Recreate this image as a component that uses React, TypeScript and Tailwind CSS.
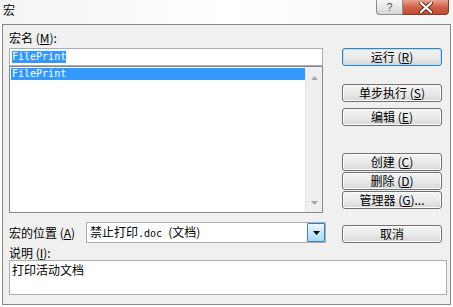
import React from "react";

const font = { fontFamily: '"Noto Sans CJK SC", "Liberation Sans", sans-serif' };
const mono = { fontFamily: '"DejaVu Sans Mono", "Liberation Mono", "Noto Sans CJK SC", monospace' };

function Btn({ children, className = "", primary = false }: { children: React.ReactNode; className?: string; primary?: boolean }) {
  return (
    <div
      className={
        "h-[18px] w-[100px] rounded-[3px] border flex items-center justify-center text-[12px] leading-[12px] text-black bg-gradient-to-b from-[#f2f2f2] via-[#ebebeb] to-[#d6d6d6] " +
        (primary ? "border-[#3c7fb1] shadow-[inset_0_0_0_1px_#aee2f7]" : "border-[#707070] shadow-[inset_0_0_0_1px_#fcfcfc]") +
        " " +
        className
      }
    >
      {children}
    </div>
  );
}

export default function App() {
  return (
    <div className="w-[453px] h-[307px] bg-white overflow-hidden text-black" style={font}>
      {/* title bar */}
      <div className="h-[24px] flex items-start justify-between bg-gradient-to-r from-[#f4f4f4] via-[#ffffff] to-[#f4f4f4]">
        <div className="pl-[3px] pt-[4px] text-[12px] leading-[12px]">宏</div>
        <div className="flex mr-[4px]">
          <div className="w-[27px] h-[15px] rounded-bl-[4px] border border-t-0 border-[#8c8c8c] bg-gradient-to-b from-[#f6f6f6] to-[#d8d8d8] flex items-center justify-center text-[11px] leading-[11px] text-[#555]" style={{ fontFamily: '"Liberation Sans", sans-serif' }}>
            ?
          </div>
          <div className="w-[46px] h-[15px] rounded-br-[4px] border border-t-0 border-l-0 border-[#8c3a2a] bg-gradient-to-b from-[#e8a493] via-[#d0604a] to-[#c24a34] flex items-center justify-center">
            <svg width="14" height="11" viewBox="0 0 14 11">
              <path d="M2 1 L12 10 M12 1 L2 10" stroke="#5a2a20" strokeWidth="4" strokeLinecap="round" />
              <path d="M2 1 L12 10 M12 1 L2 10" stroke="#ffffff" strokeWidth="2.2" strokeLinecap="round" />
            </svg>
          </div>
        </div>
      </div>

      {/* dialog panel */}
      <div className="ml-[2px] w-[449px] h-[281px] border border-[#888888] bg-[#f0f0f0] px-[6px] flex flex-col text-[12px] leading-[12px]">
        <div className="flex">
          {/* left column */}
          <div className="w-[317px] flex flex-col">
            <div className="h-[23px] pt-[7px]">
              宏名 (<u>M</u>):
            </div>
            <div className="w-[314px] h-[18px] bg-white border border-[#abadb3] pl-[2px] flex items-center">
              <span className="bg-[#3399ff] text-white text-[10px] leading-[12px]" style={mono}>
                FilePrint
              </span>
            </div>
            <div className="w-[314px] h-[147px] bg-white border border-[#828790] flex">
              <div className="flex-1 pt-[1px] pl-[1px]">
                <div className="h-[12px] bg-[#3399ff] text-white text-[10px] leading-[12px] pl-[1px]" style={mono}>
                  FilePrint
                </div>
              </div>
              <div className="w-[17px] bg-[#efefef] border-l border-[#e4e4e4] flex flex-col items-center justify-between pt-[9px] pb-[7px]">
                <svg width="7" height="4" viewBox="0 0 7 4">
                  <path d="M3.5 0 L7 4 L0 4 Z" fill="#a8a8a8" />
                </svg>
                <svg width="7" height="4" viewBox="0 0 7 4">
                  <path d="M0 0 L7 0 L3.5 4 Z" fill="#a8a8a8" />
                </svg>
              </div>
            </div>
            <div className="mt-[9px] h-[21px] flex items-center">
              <div className="w-[77px]">
                宏的位置 (<u>A</u>)
              </div>
              <div className="w-[240px] h-[21px] bg-white border border-[#abadb3] flex items-center">
                <div className="flex-1 pl-[3px]">
                  禁止打印<span style={mono} className="text-[10px]">.doc </span>(文档)
                </div>
                <div className="w-[18px] h-[19px] border border-[#3c7fb1] rounded-[1px] bg-gradient-to-b from-[#eaf6fd] to-[#a7d9f5] flex items-center justify-center">
                  <svg width="7" height="4" viewBox="0 0 7 4">
                    <path d="M0 0 L7 0 L3.5 4 Z" fill="#000" />
                  </svg>
                </div>
              </div>
            </div>
          </div>

          {/* right column */}
          <div className="ml-[16px] flex flex-col">
            <Btn primary className="mt-[23px]">
              运行 (<u>R</u>)
            </Btn>
            <Btn className="mt-[18px]">
              单步执行 (<u>S</u>)
            </Btn>
            <Btn className="mt-[6px]">
              编辑 (<u>E</u>)
            </Btn>
            <Btn className="mt-[27px]">
              创建 (<u>C</u>)
            </Btn>
            <Btn className="mt-[1px]">
              删除 (<u>D</u>)
            </Btn>
            <Btn className="mt-[1px]">
              管理器 (<u>G</u>)...
            </Btn>
            <Btn className="mt-[16px]">取消</Btn>
          </div>
        </div>

        <div className="h-[17px] pt-[4px]">
          说明 (<u>I</u>):
        </div>
        <div className="w-[438px] h-[35px] bg-white border border-[#abadb3] pl-[2px] pt-[3px]">打印活动文档</div>
      </div>
    </div>
  );
}
